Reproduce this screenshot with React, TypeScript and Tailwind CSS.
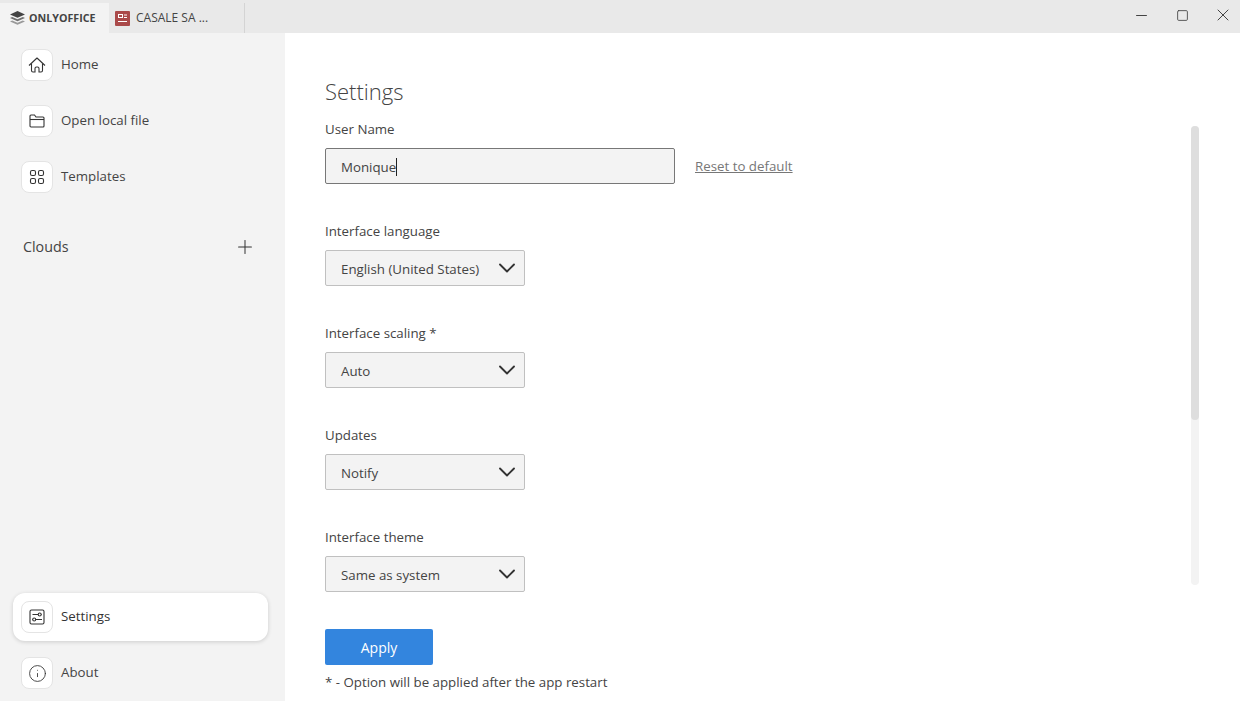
import React from 'react';
import { ChevronDown, Info, Minus, Plus, Square, X } from 'lucide-react';

const font = "font-['Segoe_UI','Open_Sans',sans-serif]";

const HomeIcon = () => (
  <svg width="18" height="18" viewBox="0 0 18 18" fill="none" stroke="#333" strokeWidth="1.1">
    <path d="M1 9.500 9 2l8 7.500" strokeLinejoin="round" />
    <path d="M3.500 7.500v7a1.500 1.500 0 0 0 1.500 1.500h2v-3.500a1.500 1.500 0 0 1 1.500-1.500h1a1.500 1.500 0 0 1 1.500 1.500V16h2a1.500 1.500 0 0 0 1.500-1.500v-7" />
  </svg>
);

const FolderIcon = () => (
  <svg width="16" height="14" viewBox="0 0 16 14" fill="none" stroke="#333" strokeWidth="1.1">
    <path d="M1 2a1 1 0 0 1 1-1h3.500l1.500 2h7a1 1 0 0 1 1 1v8a1 1 0 0 1-1 1H2a1 1 0 0 1-1-1V2Z" />
    <path d="M1 5.500h14" />
  </svg>
);

const GridIcon = () => (
  <svg width="16" height="16" viewBox="0 0 16 16" fill="none" stroke="#333" strokeWidth="1.1">
    <rect x="1.500" y="1.500" width="5" height="5" rx="1.600" />
    <rect x="9.500" y="1.500" width="5" height="5" rx="1.600" />
    <rect x="1.500" y="9.500" width="5" height="5" rx="1.600" />
    <rect x="9.500" y="9.500" width="5" height="5" rx="1.600" />
  </svg>
);

const SlidersIcon = () => (
  <svg width="16" height="16" viewBox="0 0 16 16" fill="none" stroke="#333" strokeWidth="1.1">
    <rect x="1" y="1" width="14" height="14" rx="1.500" />
    <path d="M3.500 5.500h5.500M12.500 5.500h.5M3 10.500h.500M7 10.500h6" />
    <circle cx="10.700" cy="5.500" r="1.500" />
    <circle cx="5.200" cy="10.500" r="1.500" />
  </svg>
);

const Logo = () => (
  <svg width="15" height="14" viewBox="0 0 15 14">
    <path d="M7.500 0 15 3.400 7.500 6.800 0 3.400Z" fill="#444" />
    <path d="M2.200 5.900 7.500 8.300l5.300-2.400L15 6.900l-7.500 3.400L0 6.900Z" fill="#6f6f6f" />
    <path d="M2.200 9.400 7.500 11.800l5.300-2.400L15 10.400 7.500 13.800 0 10.400Z" fill="#9a9a9a" />
  </svg>
);

const DocIcon = () => (
  <svg width="15" height="15" viewBox="0 0 15 15">
    <rect width="15" height="15" rx="1" fill="#aa4a4a" />
    <rect x="3.500" y="3.500" width="4" height="3" fill="none" stroke="#fff" />
    <path d="M9 4h3M9 6.500h3M3 10.500h9" stroke="#fff" />
  </svg>
);

const NavItem = ({ icon, label, active }: { icon: React.ReactNode; label: string; active?: boolean }) => (
  <div
    className={
      active
        ? 'mx-[13px] flex h-12 w-[255px] items-center gap-2 rounded-xl bg-white pl-2 shadow-[0_1px_4px_rgba(0,0,0,0.16)]'
        : 'mx-[13px] flex h-12 w-[255px] items-center gap-2 pl-2'
    }
  >
    <div className="flex h-8 w-8 items-center justify-center rounded-lg border border-[#e4e4e4] bg-white">{icon}</div>
    <span className={active ? 'text-[13.3px] font-medium text-[#333]' : 'text-[13.3px] text-[#444]'}>{label}</span>
  </div>
);

const Field = ({ label, value }: { label: string; value: string }) => (
  <div>
    <div className="mb-[11px] h-[16px] text-[13.3px] leading-[16px] text-[#444]">{label}</div>
    <div className="flex h-9 w-[200px] items-center justify-between rounded-[2px] border border-[#c0c0c0] bg-[#f3f3f3] pl-[15px] pr-[3px]">
      <span className="pt-[3px] text-[13.3px] text-[#444]">{value}</span>
      <ChevronDown size={28} strokeWidth={1.6} className="text-[#333]" />
    </div>
  </div>
);

export default function App() {
  return (
    <div className={`flex h-[701px] w-[1240px] flex-col overflow-hidden bg-white ${font}`}>
      <header className="flex h-[33px] shrink-0 items-end bg-[#e9e9e9]">
        <div className="flex h-[30px] w-[109px] items-center gap-[4px] bg-[#f3f3f3] pl-[10px]">
          <Logo />
          <span className="text-[10.7px] font-bold text-[#444]">ONLYOFFICE</span>
        </div>
        <div className="flex h-[30px] w-[136px] items-center gap-[6px] border-r border-[#d4d4d4] pl-[6px]">
          <DocIcon />
          <span className="text-[12px] text-[#444]">CASALE SA ...</span>
        </div>
        <div className="ml-auto flex h-[33px] items-center gap-[21px] pb-[3px] pr-[7px]">
          <div className="flex w-[20px] justify-center"><Minus size={17} strokeWidth={1.3} className="text-[#333]" /></div>
          <div className="flex w-[20px] justify-center"><Square size={13} strokeWidth={1.6} className="text-[#444]" /></div>
          <div className="flex w-[20px] justify-center"><X size={20} strokeWidth={1.1} className="text-[#333]" /></div>
        </div>
      </header>

      <div className="flex min-h-0 flex-1">
        <aside className="flex w-[285px] shrink-0 flex-col bg-[#f3f3f3] pt-[8px]">
          <div className="flex flex-col gap-2">
            <NavItem icon={<HomeIcon />} label="Home" />
            <NavItem icon={<FolderIcon />} label="Open local file" />
            <NavItem icon={<GridIcon />} label="Templates" />
          </div>
          <div className="mt-[35px] flex items-center justify-between pl-[23px] pr-[29px]">
            <span className="text-[14.300000000000001px] text-[#444]">Clouds</span>
            <Plus size={22} strokeWidth={1.1} className="text-[#333]" />
          </div>
          <div className="mt-auto mb-[4px] flex flex-col gap-2">
            <NavItem icon={<SlidersIcon />} label="Settings" active />
            <NavItem icon={<Info size={19} strokeWidth={1.1} className="text-[#333]" />} label="About" />
          </div>
        </aside>

        <main className="relative flex-1 pl-[40px] pt-[44px]">
          <h1 className="h-[28px] text-[22px] font-light leading-[28px] text-[#444]">Settings</h1>
          <div className="mb-[11px] mt-[16px] h-[16px] text-[13.3px] leading-[16px] text-[#444]">User Name</div>
          <div className="mb-[39px] flex items-center gap-5">
            <div className="flex h-9 w-[350px] items-center rounded-[2px] border border-[#777] bg-[#f3f3f3] pl-[15px]">
              <span className="mt-[2px] border-r border-[#222] text-[13.3px] leading-[18px] text-[#444]">Monique</span>
            </div>
            <span className="mt-[2px] text-[13.3px] text-[#777] underline">Reset to default</span>
          </div>
          <div className="flex flex-col gap-[39px]">
            <Field label="Interface language" value="English (United States)" />
            <Field label="Interface scaling *" value="Auto" />
            <Field label="Updates" value="Notify" />
            <Field label="Interface theme" value="Same as system" />
          </div>
          <button type="button" className={`mt-[37px] h-9 w-[108px] rounded-[2px] bg-[#3385de] text-[14px] text-white ${font}`}>Apply</button>
          <div className="mt-[8px] text-[13.3px] leading-[18px] text-[#444]">* - Option will be applied after the app restart</div>

          <div className="absolute left-[906px] top-[93px] h-[459px] w-2 rounded-full bg-[#f3f3f3]">
            <div className="h-[294px] w-2 rounded-full bg-[#dedede]" />
          </div>
        </main>
      </div>
    </div>
  );
}
